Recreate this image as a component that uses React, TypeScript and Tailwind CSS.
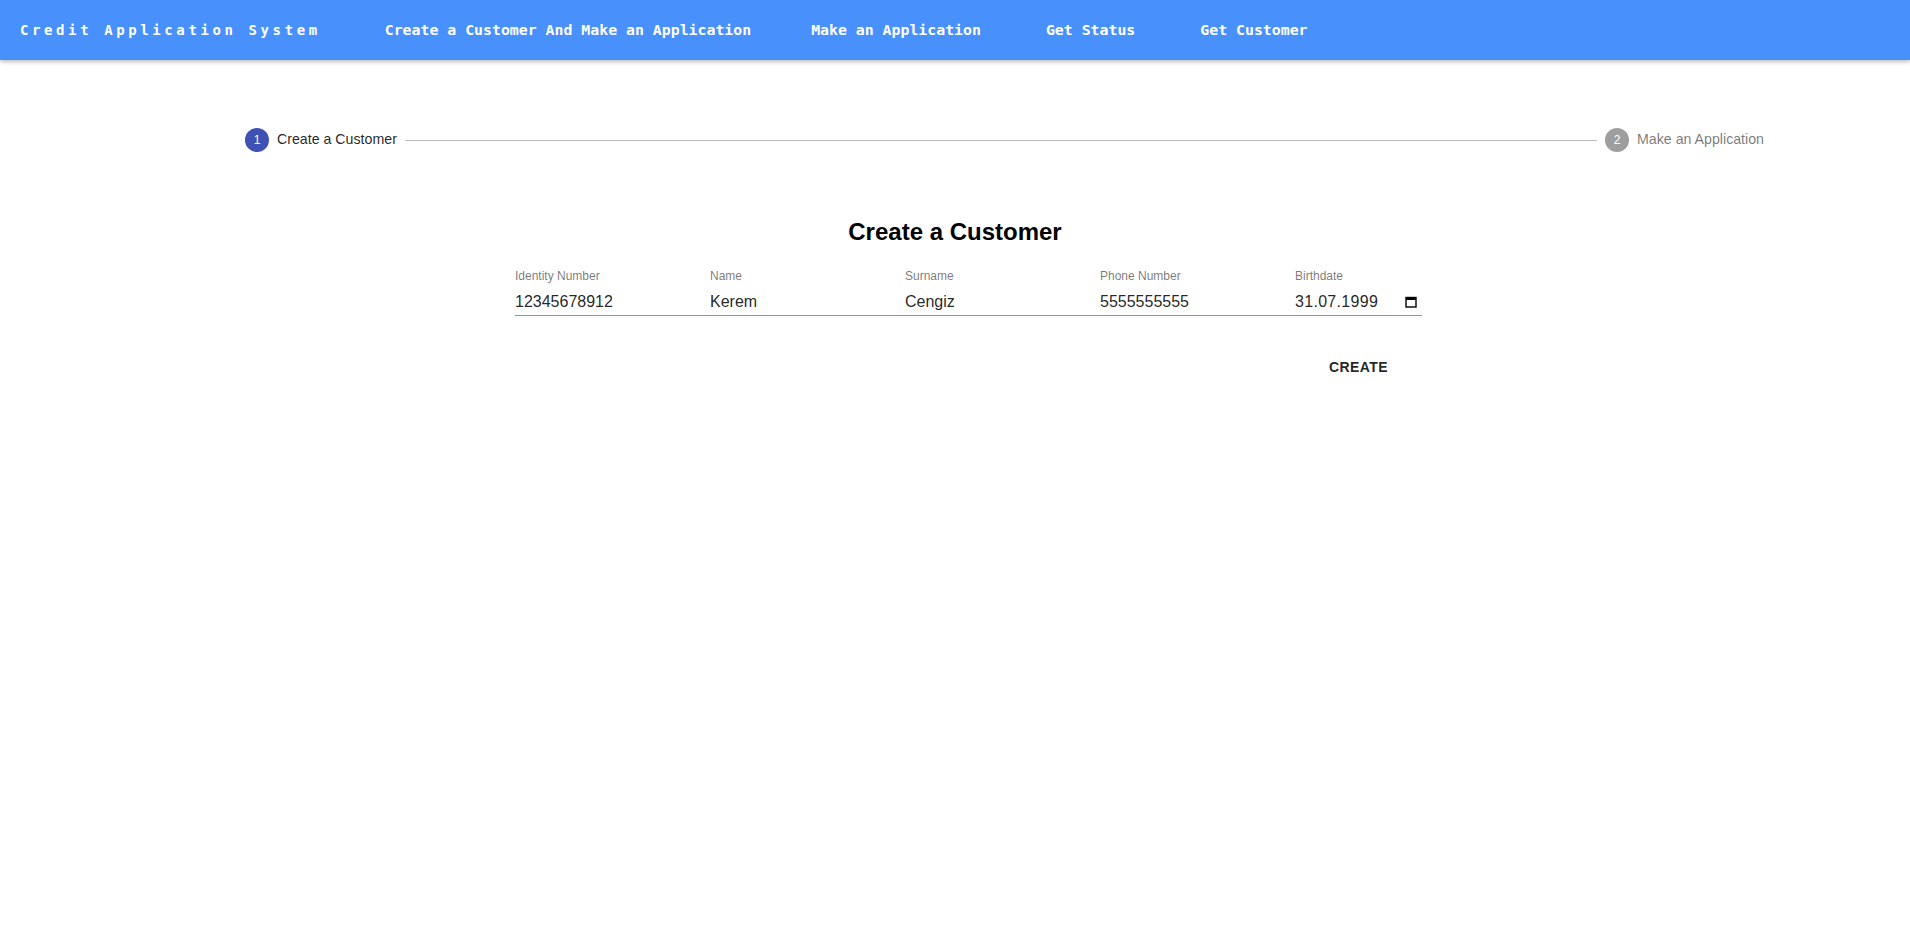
const navLinks = [
  { text: "Create a Customer And Make an Application", gap: "ml-0" },
  { text: "Make an Application", gap: "ml-[60px]" },
  { text: "Get Status", gap: "ml-[65px]" },
  { text: "Get Customer", gap: "ml-[65px]" },
];

const fields = [
  { label: "Identity Number", value: "12345678912" },
  { label: "Name", value: "Kerem" },
  { label: "Surname", value: "Cengiz" },
  { label: "Phone Number", value: "5555555555" },
];

const CalendarIcon = () => (
  <svg width="12" height="12" viewBox="0 0 12 12" className="text-black">
    <rect x="1" y="1.5" width="10" height="9.5" fill="none" stroke="currentColor" strokeWidth="1.4" />
    <rect x="1" y="1.5" width="10" height="2.5" fill="currentColor" />
  </svg>
);

const App = () => {
  return (
    <div className="min-h-screen bg-white font-['Liberation_Sans',Arial,sans-serif]">
      <nav className="flex h-[60px] items-center bg-[#4890fc] pl-[20px] text-white shadow-[0_2px_4px_rgba(0,0,0,0.25)]">
        <span className="font-['DejaVu_Sans_Mono',monospace] text-[14px] font-bold tracking-[3.6px]">
          Credit Application System
        </span>
        <ul className="ml-[64px] flex font-['DejaVu_Sans_Mono',monospace] text-[14.85px] font-bold">
          {navLinks.map((link) => (
            <li key={link.text} className={`cursor-pointer ${link.gap}`}>
              {link.text}
            </li>
          ))}
        </ul>
      </nav>

      <div className="mt-[68px] flex items-center pl-[245px] pr-[146px]">
        <div className="flex items-center">
          <span className="flex h-[24px] w-[24px] items-center justify-center rounded-full bg-[#3f51b5] text-[12px] text-white">
            1
          </span>
          <span className="ml-[8px] text-[14.2px] text-[rgba(0,0,0,0.87)]">Create a Customer</span>
        </div>
        <div className="mx-[8px] h-px flex-1 bg-[#bdbdbd]" />
        <div className="flex items-center">
          <span className="flex h-[24px] w-[24px] items-center justify-center rounded-full bg-[#9e9e9e] text-[12px] text-white">
            2
          </span>
          <span className="ml-[8px] text-[14.2px] text-[rgba(0,0,0,0.54)]">Make an Application</span>
        </div>
      </div>

      <h1 className="mt-[65px] text-center text-[24px] font-bold leading-[30px] text-black">Create a Customer</h1>

      <div className="ml-[515px] mt-[22px] flex w-[907px] border-b border-[#949494]">
        {fields.map((f) => (
          <div key={f.label} className="flex w-[195px] flex-col">
            <label className="text-[12px] leading-[14px] text-[rgba(0,0,0,0.54)]">{f.label}</label>
            <span className="pb-[4px] pt-[9px] text-[16px] leading-[19px] text-[rgba(0,0,0,0.87)]">{f.value}</span>
          </div>
        ))}
        <div className="flex flex-1 flex-col">
          <label className="text-[12px] leading-[14px] text-[rgba(0,0,0,0.54)]">Birthdate</label>
          <div className="flex items-center justify-between pb-[4px] pt-[9px] pr-[5px]">
            <span className="text-[16px] leading-[19px] tracking-[0.3px] text-[rgba(0,0,0,0.87)]">31.07.1999</span>
            <CalendarIcon />
          </div>
        </div>
      </div>

      <div className="ml-[1321px] mt-[33px]">
        <button className="px-[8px] py-[6px] text-[14px] font-bold uppercase leading-[24px] tracking-[0.4px] text-[rgba(0,0,0,0.87)]">
          Create
        </button>
      </div>
    </div>
  );
};

export default App;
